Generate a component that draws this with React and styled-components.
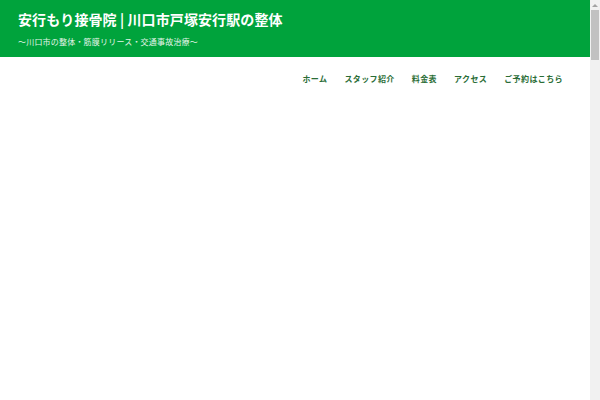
import React from "react";
import styled, { createGlobalStyle } from "styled-components";

const GlobalStyle = createGlobalStyle`
  html, body {
    margin: 0;
    padding: 0;
    background: #fff;
    font-family: "Noto Sans CJK JP", "Noto Sans", sans-serif;
  }
`;

const navItems = ["ホーム", "スタッフ紹介", "料金表", "アクセス", "ご予約はこちら"];

export default function App() {
  return (
    <Page>
      <GlobalStyle />
      <Header>
        <SiteTitle>安行もり接骨院 | 川口市戸塚安行駅の整体</SiteTitle>
        <Tagline>〜川口市の整体・筋膜リリース・交通事故治療〜</Tagline>
      </Header>
      <Nav>
        {navItems.map((item) => (
          <NavLink key={item} href="#">
            {item}
          </NavLink>
        ))}
      </Nav>
      <ScrollTrack>
        <ScrollArrow />
        <ScrollThumb />
      </ScrollTrack>
    </Page>
  );
}

const Page = styled.div`
  min-height: 3000px;
  margin-right: 10px;
`;

const Header = styled.header`
  background: #00a33c;
  height: 57px;
  padding: 9px 18px 0;
  box-sizing: border-box;
  display: flex;
  flex-direction: column;
`;

const SiteTitle = styled.h1`
  margin: 0;
  color: #fff;
  font-size: 14px;
  font-weight: 700;
  line-height: 20px;
  letter-spacing: 0.1px;
`;

const Tagline = styled.p`
  margin: 7px 0 0;
  color: #e3f4e8;
  font-size: 8px;
  line-height: 12px;
  letter-spacing: 0.2px;
`;

const Nav = styled.nav`
  display: flex;
  justify-content: flex-end;
  gap: 17px;
  padding: 16px 27px 0 0;
`;

const NavLink = styled.a`
  color: #2a6d36;
  font-size: 8px;
  font-weight: 700;
  letter-spacing: 0.4px;
  line-height: 12px;
  text-decoration: none;
`;

/* browser scrollbar as seen in the capture */
const ScrollTrack = styled.div`
  position: fixed;
  top: 0;
  right: 0;
  bottom: 0;
  width: 10px;
  background: #f1f1f1;
  display: flex;
  flex-direction: column;
  align-items: center;
`;

const ScrollArrow = styled.div`
  margin-top: 4px;
  width: 0;
  height: 0;
  border-left: 3px solid transparent;
  border-right: 3px solid transparent;
  border-bottom: 3px solid #a3a3a3;
`;

const ScrollThumb = styled.div`
  margin-top: 3px;
  width: 8px;
  height: 50px;
  background: #c1c1c1;
`;
